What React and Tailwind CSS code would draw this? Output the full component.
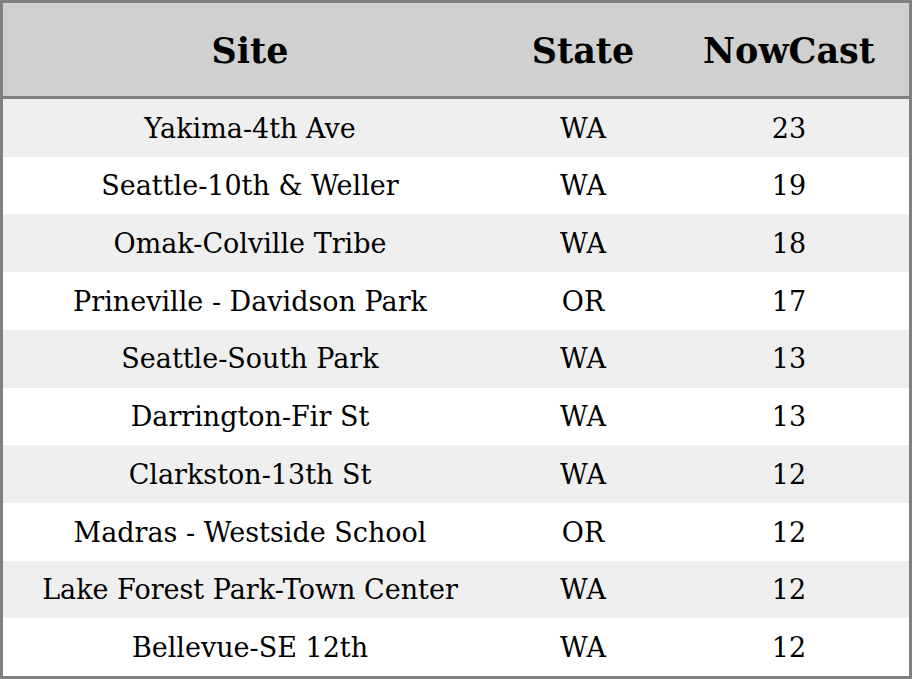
import React from "react";

const rows = [
  ["Yakima-4th Ave", "WA", "23"],
  ["Seattle-10th & Weller", "WA", "19"],
  ["Omak-Colville Tribe", "WA", "18"],
  ["Prineville - Davidson Park", "OR", "17"],
  ["Seattle-South Park", "WA", "13"],
  ["Darrington-Fir St", "WA", "13"],
  ["Clarkston-13th St", "WA", "12"],
  ["Madras - Westside School", "OR", "12"],
  ["Lake Forest Park-Town Center", "WA", "12"],
  ["Bellevue-SE 12th", "WA", "12"],
];

export default function App() {
  return (
    <div className="w-[912px] h-[679px] bg-white border-[3px] border-[#808080] flex flex-col text-black font-['DejaVu_Serif',serif]">
      <div className="h-[96px] shrink-0 pt-[3px] bg-[#d0d0d0] border-b-[3px] border-[#808080] grid grid-cols-[494px_172px_1fr] items-center text-[35px] font-bold">
        <div className="text-center">Site</div>
        <div className="text-center">State</div>
        <div className="text-center">NowCast</div>
      </div>
      <div className="flex-1 flex flex-col">
        {rows.map(([site, state, now], i) => (
          <div
            key={site}
            className={
              "flex-1 pt-[2px] grid grid-cols-[494px_172px_1fr] items-center text-[27px] " +
              (i % 2 === 0 ? "bg-[#efefef]" : "bg-white")
            }
          >
            <div className="text-center">{site}</div>
            <div className="text-center">{state}</div>
            <div className="text-center">{now}</div>
          </div>
        ))}
      </div>
    </div>
  );
}
